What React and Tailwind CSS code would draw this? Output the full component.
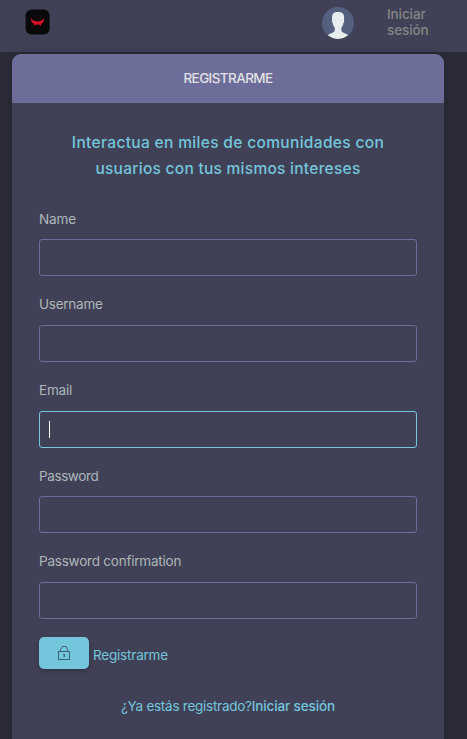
const fields = [
  { label: 'Name', gap: 'mt-0', inner: 'mt-[10px]', tracking: 'tracking-[-0.1px]' },
  { label: 'Username', gap: 'mt-[18px]', inner: 'mt-[11px]', tracking: 'tracking-[-0.25px]' },
  { label: 'Email', gap: 'mt-[18px]', inner: 'mt-[11px]', tracking: 'tracking-[-0.2px]', focused: true },
  { label: 'Password', gap: 'mt-[18px]', inner: 'mt-[10px]', tracking: 'tracking-[-0.4px]' },
  { label: 'Password confirmation', gap: 'mt-[18px]', inner: 'mt-[11px]', tracking: 'tracking-[-0.22px]' },
];

function Logo() {
  return (
    <svg className="block h-[26px] w-[25px]" viewBox="0 0 25 26">
      <rect x="0.6" y="0.4" width="24" height="25" rx="6" fill="#09090b" />
      <path
        d="M6 8.8 C8.100 13.800 17 13.800 19.100 8.800 C19.200 12 18.400 13.800 16.600 14.600 L15.400 17 L14.100 15.300 L12.600 15.900 L11.100 15.300 L9.800 17 L8.600 14.600 C6.800 13.800 5.900 12 6 8.800 Z"
        fill="#dc1022"
      />
    </svg>
  );
}

function Avatar() {
  return (
    <svg className="block size-8 rounded-full" viewBox="0 0 32 32">
      <rect width="32" height="32" fill="#556080" />
      <path
        d="M16 5 C11.700 5 10 6.800 10 10.500 L10.100 12.500 C9.700 14 10 15.500 10.700 16 C11 18 11.700 19.600 12.700 20.400 L12.700 23.500 C12.500 26 8 26.300 5.800 28.300 C8.200 31 12 32 16 32 C20 32 23.800 31 26.200 28.300 C24 26.300 19.600 26 19.400 23.500 L19.400 20.400 C20.400 19.600 21.100 18 21.400 16 C22.100 15.500 22.400 14 22 12.500 L22.100 10.500 C22.100 6.800 20.300 5 16 5 Z"
        fill="#e7eced"
      />
    </svg>
  );
}

function LockIcon() {
  return (
    <svg className="block h-[14px] w-[12px]" viewBox="0 0 12 14" fill="none" stroke="#3f5f74">
      <rect x="0.5" y="5.5" width="11" height="8" />
      <path d="M2.500 5.500 V3.500 L4.500 0.500 H8 L9.500 3.500 V5.500" strokeLinejoin="round" />
      <path d="M6.300 8 V11" strokeWidth="1.2" />
      <path d="M5 8.500 H7" strokeWidth="1" />
    </svg>
  );
}

function Field({ label, gap, inner, tracking, focused }) {
  return (
    <div className={gap}>
      <label className={`block h-[20px] w-max text-[13.5px] leading-[20px] whitespace-nowrap text-[#adb7b9] ${tracking}`}>
        {label}
      </label>
      <div
        className={`flex h-[37px] items-center rounded-[3px] border px-[9px] ${inner} ${
          focused ? 'border-[#74c6dd]' : 'border-[#6c6d99]'
        }`}
      >
        {focused && <span className="h-[17px] w-px bg-white" />}
      </div>
    </div>
  );
}

export default function App() {
  return (
    <div className="h-[739px] w-[467px] overflow-hidden bg-[#2c2c38] font-['Inter','Liberation_Sans',sans-serif]">
      <header className="flex h-[52px] items-start bg-[#404156]">
        <div className="ml-[25px] pt-[9px]">
          <Logo />
        </div>
        <div className="ml-[272px] pt-[7px]">
          <Avatar />
        </div>
        <a className="ml-[33px] w-[60px] pt-[6px] text-[13.5px] leading-4 font-medium tracking-[-0.1px] text-[#858585]">
          Iniciar
          <br />
          sesión
        </a>
      </header>

      <main className="mt-[2px] ml-3 h-[720px] w-[432px] overflow-hidden rounded-t-[9px] bg-[#404156] shadow-[0_0_12px_rgba(0,0,0,0.22)]">
        <h1 className="flex h-[49px] items-center justify-center bg-[#6c6d99] pb-px text-[13.5px] font-medium tracking-[-0.6px] text-[#e1e1e3]">
          REGISTRARME
        </h1>
        <p className="mt-[27px] text-center text-[15.5px] leading-[26px] font-medium text-[#74c6dd]">
          <span className="inline-block tracking-[0.34px]">Interactua en miles de comunidades con</span>
          <br />
          <span className="inline-block tracking-[0.27px]">usuarios con tus mismos intereses</span>
        </p>
        <form className="mt-[27px] px-[27px]">
          {fields.map((field) => (
            <Field key={field.label} {...field} />
          ))}
          <div className="mt-[18px] flex h-8">
            <button
              type="button"
              className="flex h-8 w-[50px] items-center justify-center rounded-[5px] bg-[#74c6dd] shadow-[0_2px_5px_rgba(0,0,0,0.28)]"
            >
              <LockIcon />
            </button>
            <span className="ml-1 pt-[8px] text-[13.5px] leading-[21px] tracking-[-0.2px] text-[#74c6dd]">
              Registrarme
            </span>
          </div>
        </form>
        <p className="mt-[27px] flex justify-center text-[13.5px] leading-[21px] whitespace-nowrap text-[#74c6dd]">
          <span className="tracking-[-0.26px]">¿Ya estás registrado?</span>
          <a className="font-medium tracking-[-0.12px]">Iniciar sesión</a>
        </p>
      </main>
    </div>
  );
}
